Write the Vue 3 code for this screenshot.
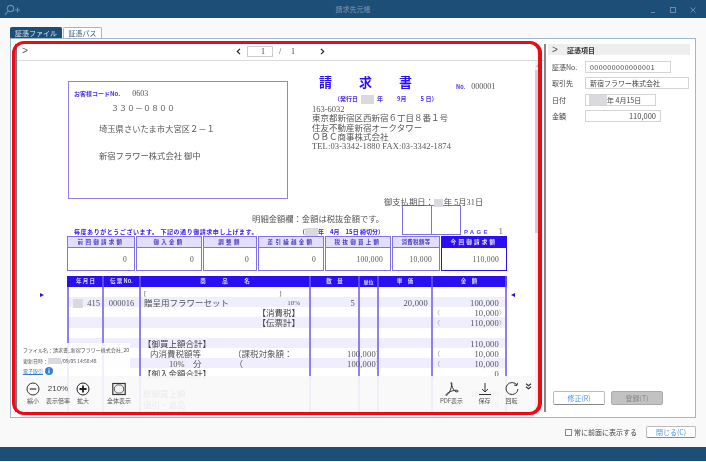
<template>
  <div class="window">
    <header class="titlebar">
      <svg class="zoom-icon" width="17" height="12" viewBox="0 0 17 12" fill="none" stroke="#6f8ba6" stroke-width="1.2">
        <circle cx="6.5" cy="4.5" r="3.2" />
        <path d="M4 7 1 11M11 6h5M13.500 3.500v5" />
      </svg>
      <span class="title">請求先元帳</span>
      <div class="controls">
        <svg width="8" height="8" viewBox="0 0 8 8" stroke="#6f8ba6" fill="none"><path d="M2 6.500h4" /></svg>
        <svg width="8" height="8" viewBox="0 0 8 8" stroke="#6f8ba6" fill="none"><rect x="1.500" y="1.500" width="5" height="5" /></svg>
        <svg width="8" height="8" viewBox="0 0 8 8" stroke="#6f8ba6" fill="none"><path d="m1.500 1.500 5 5M6.500 1.500l-5 5" /></svg>
      </div>
    </header>

    <main class="content">
      <div class="tabs">
        <span class="tab active">証憑ファイル</span>
        <span class="tab">証憑パス</span>
      </div>

      <section class="panel">
        <div class="viewer">
          <div class="pager">
            <span class="expand">&gt;</span>
            <svg class="pg-prev" width="5" height="7" viewBox="0 0 5 7" fill="none" stroke="#222" stroke-width="1.200"><path d="M4 .8 1.300 3.500 4 6.200" /></svg>
            <span class="pg-input">1</span>
            <span class="pg-slash">/</span>
            <span class="pg-total">1</span>
            <svg class="pg-next" width="5" height="7" viewBox="0 0 5 7" fill="none" stroke="#222" stroke-width="1.200"><path d="M1 .8 3.700 3.500 1 6.200" /></svg>
          </div>

          <div class="doc-wrap">
            <div class="doc">
              <div class="doc-top">
                <div class="addr">
                  <div class="addr-code"><b>お客様コードNo.</b><span>0603</span></div>
                  <div class="addr-zip">３３０－０８００</div>
                  <div class="addr-line">埼玉県さいたま市大宮区２－１</div>
                  <div class="addr-name">新宿フラワー株式会社 御中</div>
                </div>
                <div class="issuer">
                  <div class="issuer-head">
                    <span class="big">請求書</span>
                    <span class="no"><b>No.</b>000001</span>
                  </div>
                  <div class="issued">（発行日<i class="redact r-issue"></i>年<em>9月</em><em>5 日）</em></div>
                  <div class="company">
                    <div>163-6032</div>
                    <div>東京都新宿区西新宿６丁目８番１号</div>
                    <div>住友不動産新宿オークタワー</div>
                    <div>ＯＢＣ商事株式会社</div>
                    <div class="tel">TEL:03-3342-1880 FAX:03-3342-1874</div>
                  </div>
                </div>
              </div>

              <div class="doc-mid">
                <div class="mid-left">
                  <div class="mid-note">明細金額欄：金額は税抜金額です。</div>
                  <div class="thanks">
                    <span>毎度ありがとうございます。 下記の通り御請求申し上げます。</span>
                    <span>（<i class="redact r-thanks"></i>年　4月　15日 締切分）</span>
                  </div>
                </div>
                <div class="mid-stamp">
                  <div class="due">御支払期日：<i class="redact r-due"></i>年 5月31日</div>
                  <div class="stamps"><span></span><span></span></div>
                </div>
                <div class="page-no"><b>PAGE</b>1</div>
              </div>

              <div class="summary">
                <div v-for="s in summary" :key="s.label" class="sum-cell" :class="{ last: s.last }">
                  <div class="sum-head" :class="{ tight: s.tight }">{{ s.label }}</div>
                  <div class="sum-val">{{ s.value }}</div>
                </div>
              </div>

              <div class="detail">
                <span class="marker left"></span>
                <span class="marker right"></span>
                <div class="d-row d-head">
                  <span>年 月 日</span><span>伝 票 No.</span><span class="wide">商　　　品　　　名</span>
                  <span>数　量</span><span class="small">単位</span><span>単　価</span><span>金　額</span>
                </div>
                <div v-for="(r, i) in rows" :key="i" class="d-row" :class="{ zebra: r.zebra }">
                  <span class="c-date"><i v-if="r.date" class="redact r-date"></i>{{ r.date }}</span>
                  <span class="c-slip">{{ r.slip }}</span>
                  <span class="c-name" :class="r.nameClass">
                    <span>{{ r.name }}</span><span v-if="r.note" class="note">{{ r.note }}</span>
                  </span>
                  <span class="c-num c-qty"><b :class="{ over: r.over }">{{ r.qty }}</b></span>
                  <span></span>
                  <span class="c-num">{{ r.price }}</span>
                  <span class="c-amt">
                    <span>{{ r.open }}</span><span>{{ r.amount }}</span><span class="close">{{ r.close }}</span>
                  </span>
                </div>
              </div>
            </div>

            <div class="file-info">
              <div>ファイル名：請求書_新宿フラワー株式会社_20</div>
              <div>更新日時：<i class="redact r-info"></i>/09/05 14:58:48</div>
              <div class="link-row">
                <a>電子取引</a>
                <svg width="8" height="8" viewBox="0 0 8 8"><circle cx="4" cy="4" r="4" fill="#2f80d8" /><path d="M4 3.300v3M4 1.500v1" stroke="#fff" stroke-width="1.100" /></svg>
              </div>
            </div>

            <div class="tools">
              <div class="tool">
                <svg width="14" height="14" viewBox="0 0 14 14" fill="none" stroke="#333"><circle cx="7" cy="7" r="6" /><path d="M3.800 7h6.400" stroke-width="1.200" /></svg>
                <span>縮小</span>
              </div>
              <div class="tool">
                <strong>210%</strong>
                <span>表示倍率</span>
              </div>
              <div class="tool">
                <svg width="14" height="14" viewBox="0 0 14 14" fill="none" stroke="#222"><circle cx="7" cy="7" r="6" /><path d="M3.500 7h7M7 3.500v7" stroke-width="1.800" /></svg>
                <span>拡大</span>
              </div>
              <div class="tool fit">
                <svg width="14" height="14" viewBox="0 0 14 14" fill="none" stroke="#333"><rect x=".8" y="1.500" width="12.400" height="11" stroke-width="1.200" /><path d="M2.500 5Q4 4.500 4.500 3h5q.5 1.500 2 2v4q-1.500.5-2 2h-5Q4 9.500 2.500 9Z" stroke-width=".7" fill="#f2f2f2" /></svg>
                <span>全体表示</span>
              </div>
              <div class="tool pdf">
                <svg width="14" height="14" viewBox="0 0 14 14" fill="none" stroke="#333" stroke-width="1"><path d="M6 .8c.6 3 2 6.500 3.800 8.300 1.200 1.100 3.400 1 3.400 0 0-1-2.300-1.200-5.700-.3-3 .8-6 2.600-6.600 4.100-.3.800 1 .6 2-.6C5 10.600 7 4 6.800 1.200 6.700.4 6.100.4 6 .8Z" /></svg>
                <span>PDF表示</span>
              </div>
              <div class="tool save">
                <svg width="14" height="14" viewBox="0 0 14 14" fill="none" stroke="#333"><path d="M7 1v9M4 7l3 3 3-3M1 12.500h12" /></svg>
                <span>保存</span>
              </div>
              <div class="tool rotate">
                <svg width="14" height="14" viewBox="0 0 14 14" fill="none" stroke="#333"><path d="M12 3.200A6 6 0 1 0 13 7M12.500.8 12 3.500l-2.800-.4" /></svg>
                <span>回転</span>
              </div>
              <svg class="more" width="7" height="7" viewBox="0 0 7 7" fill="none" stroke="#333" stroke-width="1.100"><path d="m1 .8 2.500 2L6 .8M1 3.800l2.500 2 2.500-2" /></svg>
            </div>

            <div class="scrollbar"><span class="arrow"></span><span class="thumb"></span></div>
          </div>
        </div>

        <div class="splitter"></div>

        <aside class="side">
          <div class="side-head"><span class="expand">&gt;</span><b>証憑項目</b></div>
          <div class="fields">
            <div v-for="f in fields" :key="f.label" class="field">
              <label>{{ f.label }}</label>
              <div class="input" :class="f.cls"><i v-if="f.redact" class="redact r-field"></i>{{ f.value }}</div>
            </div>
          </div>
          <div class="side-actions">
            <button class="btn">修正(R)</button>
            <button class="btn off">登録(T)</button>
          </div>
        </aside>

        <div class="highlight"></div>
      </section>

      <footer class="foot">
        <span class="check"></span>
        <span class="check-label">常に前面に表示する</span>
        <button class="btn close">閉じる(C)</button>
      </footer>
    </main>

    <div class="statusbar"></div>
  </div>
</template>

<script setup>
const summary = [
  { label: '前回御請求額', value: '0' },
  { label: '御入金額', value: '0' },
  { label: '調整額', value: '0' },
  { label: '差引繰越金額', value: '0' },
  { label: '税抜御買上額', value: '100,000' },
  { label: '消費税額等', value: '10,000', tight: true },
  { label: '今回御請求額', value: '110,000', last: true },
]

const rows = [
  { name: '[　　　　　　　　　　　　　　　　　　　]', nameClass: 'n-bracket' },
  { zebra: true, date: '415', slip: '000016', name: '贈呈用フラワーセット', note: '10%', nameClass: 'n-item', qty: '5', price: '20,000', amount: '100,000' },
  { name: '【消費税】', nameClass: 'n-right', open: '〈', amount: '10,000', close: '〉' },
  { zebra: true, name: '【伝票計】', nameClass: 'n-right', open: '〈', amount: '110,000', close: '〉' },
  {},
  { zebra: true, name: '【御買上額合計】', nameClass: 'n-total', amount: '110,000' },
  { name: '内消費税額等', note: '（課税対象額：', nameClass: 'n-tax', qty: '100,000)', over: true, open: '（', amount: '10,000' },
  { zebra: true, name: '10%　分', note: '（', nameClass: 'n-tax2', qty: '100,000)', over: true, open: '（', amount: '10,000' },
  { name: '【御入金額合計】', nameClass: 'n-total', amount: '0' },
  {},
  { name: '総御買上額', nameClass: 'n-total', amount: '100,000' },
  { name: '値引・返品', nameClass: 'n-total', amount: '0' },
  { name: '純御買上額', nameClass: 'n-total', amount: '100,000' },
]

const fields = [
  { label: '証憑No.', value: '000000000000001', cls: 'w-no' },
  { label: '取引先', value: '新宿フラワー株式会社', cls: 'w-client' },
  { label: '日付', value: '年 4月15日', cls: 'w-date', redact: true },
  { label: '金額', value: '110,000', cls: 'w-amount' },
]
</script>

<style>
html, body { margin: 0; background: #fff; }
</style>

<style scoped>
.window {
  width: 706px; height: 462px; box-sizing: border-box; overflow: hidden;
  display: flex; flex-direction: column; background: #f9f9f9;
  font-family: "Noto Sans CJK JP", "Noto Sans", sans-serif; color: #444;
}
.titlebar {
  height: 18px; flex: none; background: #1c4e78; display: flex; align-items: center;
  justify-content: center; position: relative;
}
.zoom-icon { position: absolute; left: 4px; top: 4px; }
.title { font-size: 7px; color: #7f98b0; }
.controls { position: absolute; right: 9px; top: 6px; display: flex; gap: 12px; }

.content { flex: 1; min-height: 0; padding: 9px 10px 0; display: flex; flex-direction: column; }
.tabs { display: flex; height: 11px; gap: 1px; filter: blur(.3px); }
.tab {
  box-sizing: border-box; width: 39px; font-size: 7px; line-height: 10px; text-align: center;
  background: #fff; border: 1px solid #9fb8cf; border-bottom: 0; border-radius: 2px 2px 0 0; color: #3d5f7e;
}
.tab.active { width: 52px; background: #1c4e78; border-color: #1c4e78; color: #dbe6f0; }

.panel {
  position: relative; height: 380px; box-sizing: border-box; background: #fff;
  border: 1px solid #9fb8cf; padding: 5px 0 5px 4px; display: flex;
}
.highlight {
  position: absolute; left: 1px; top: 2px; width: 530px; height: 374px; box-sizing: border-box;
  border: 3px solid #ee0a14; border-right-width: 4px; border-radius: 12px; pointer-events: none;
}

.viewer { width: 529px; flex: none; box-sizing: border-box; border-left: 2px solid #777; display: flex; flex-direction: column; filter: blur(.3px); }
.pager {
  height: 17px; flex: none; box-sizing: border-box; border-bottom: 1px solid #ddd; display: flex; align-items: center;
  font-family: "Liberation Serif", serif; font-size: 8px; color: #444; padding-bottom: 2px;
}
.expand { font-family: "Liberation Sans", sans-serif; font-size: 10px; line-height: 10px; color: #555; }
.pager .expand { margin-left: 5px; width: 214px; }
.pg-prev { margin-right: 6px; }
.pg-input {
  box-sizing: border-box; width: 26px; height: 11px; border: 1px solid #ccc; text-align: right; padding-right: 7px; line-height: 9px;
}
.pg-slash { margin-left: 6px; width: 12px; }
.pg-total { width: 29px; }

.doc-wrap { position: relative; flex: 1; min-height: 0; overflow: hidden; }
.doc {
  height: 100%; box-sizing: border-box; padding-left: 50px; overflow: hidden; background: #fff;
  font-family: "Liberation Serif", "Noto Sans CJK JP", serif; color: #555;
}
.redact { display: inline-block; background: #d9d9de; vertical-align: middle; }

.doc-top { height: 124px; padding-top: 14px; display: flex; }
.addr {
  box-sizing: border-box; width: 220px; height: 118px; margin: 6px 0 0 1px; border: 1.500px solid #8f80ea;
  position: relative; padding: 5px 5px; font-size: 8.300px;
}
.addr-code { display: flex; gap: 12px; align-items: center; height: 12px; }
.addr-code b { font-size: 6px; color: #4a30e8; font-family: "Noto Sans CJK JP", sans-serif; }
.addr-code span { font-size: 8px; }
.addr-zip { margin: 5px 0 0 37px; font-size: 8px; line-height: 10px; }
.addr-line { margin: 11px 0 0 25px; line-height: 10px; }
.addr-name { margin: 17px 0 0 25px; line-height: 10px; }

.issuer { margin-left: 24px; width: 200px; flex: none; }
.issuer-head { display: flex; height: 17px; align-items: flex-end; margin-left: 7px; }
.big {
  font: 700 13px/16px "Noto Sans CJK JP", sans-serif; color: #2a10f0; letter-spacing: 27px; margin-bottom: 2px;
}
.no { margin-left: 17px; font-size: 8px; line-height: 10px; white-space: nowrap; }
.no b { font-size: 5.500px; color: #4a30e8; font-family: "Noto Sans CJK JP", sans-serif; margin-right: 6px; }
.issued {
  margin: 2px 0 0 22px; height: 9px; font: 700 6px/9px "Noto Sans CJK JP", sans-serif;
  color: #4a30e8; white-space: nowrap;
}
.issued em { font-style: normal; margin-left: 14px; }
.r-issue { width: 13px; height: 9px; margin: 0 3px; }
.company { margin-top: 2px; font-size: 8.500px; line-height: 9.300px; white-space: nowrap; }
.tel { letter-spacing: .12px; }

.doc-mid { height: 37px; display: flex; }
.mid-left { width: 317px; flex: none; display: flex; flex-direction: column; justify-content: flex-end; }
.mid-note { text-align: right; font-size: 8.300px; line-height: 10px; padding-bottom: 2px; }
.thanks {
  display: flex; justify-content: space-between; padding-left: 7px; height: 9px; white-space: nowrap;
  font: 700 6px/9px "Noto Sans CJK JP", sans-serif; color: #3d20ec;
}
.thanks span:first-child { letter-spacing: .55px; }
.r-thanks { width: 13px; height: 8px; }
.mid-stamp { width: 80px; flex: none; }
.due { height: 6px; line-height: 6px; font-size: 8.300px; white-space: nowrap; }
.r-due { width: 9px; height: 8px; margin-right: 1px; }
.stamps { margin-left: 18px; display: flex; width: 59px; height: 30px; box-sizing: border-box; border: 1.500px solid #7f6fe8; }
.stamps span { flex: 1; }
.stamps span + span { border-left: 1.500px solid #7f6fe8; }
.page-no { align-self: flex-end; height: 9px; line-height: 9px; font-size: 8px; white-space: nowrap; }
.page-no b { font: 700 6px/9px "Liberation Sans", sans-serif; color: #5a44ea; letter-spacing: 2.300px; margin-right: 9px; }

.summary { width: 440px; display: grid; grid-template-columns: 68px 66px 54px 66px 66px 48px 66px; gap: 1px; }
.sum-cell { height: 35px; box-sizing: border-box; border: 1.500px solid #8373ea; display: flex; flex-direction: column; }
.sum-head {
  height: 10px; flex: none; background: #e2defb; border-bottom: 1px solid #8373ea; text-align: center;
  font: 700 5.500px/10px "Noto Sans CJK JP", sans-serif; letter-spacing: 2.300px; color: #4a3bc0; white-space: nowrap;
}
.sum-head.tight { letter-spacing: .3px; }
.sum-val { flex: 1; text-align: right; padding-right: 7px; font-size: 7.500px; line-height: 24px; letter-spacing: .3px; }
.sum-cell.last { border-color: #2a10f0; }
.last .sum-head { background: #2a10f0; color: #e6e3fb; border-color: #2a10f0; }

.detail { position: relative; width: 440px; margin-top: 5px; }
.marker { position: absolute; top: 17px; width: 0; height: 0; border: 2.500px solid transparent; }
.marker.left { left: -27px; border-left: 4px solid #2a10f0; border-right: 0; }
.marker.right { right: -8px; border-right: 4px solid #2a10f0; border-left: 0; }
.d-row {
  display: grid; grid-template-columns: 37px 37px 170px 49px 19px 54px 74px; height: 10.150px;
  font-size: 8.500px; line-height: 10px; white-space: nowrap;
}
.d-row > span { border-right: 2px solid #8f80ea; box-sizing: border-box; overflow: hidden; padding-top: 1px; }
.d-row > span:first-child { border-left: 2px solid #8f80ea; }
.d-row.zebra { background: #f0eefc; }
.d-head {
  height: 11px; background: #2a10f0; color: #dcd8ff; text-align: center;
  font: 700 5.500px/11px "Noto Sans CJK JP", sans-serif;
}
.d-head > span { border-color: #5a48f0; padding-top: 0; }
.d-head > span:first-child { border-left-color: #2a10f0; }
.d-head .small { font-size: 5px; }
.c-date { padding-right: 2px; display: flex; justify-content: flex-end; align-items: center; gap: 4px; }
.r-date { width: 10px; height: 9px; }
.c-slip { text-align: center; }
.d-row > .c-num { text-align: right; padding-right: 3px; letter-spacing: .2px; overflow: visible; }
.c-qty b { font-weight: 400; display: block; }
.c-qty b.over { margin-right: -24px; }
.c-name { display: flex; justify-content: space-between; padding: 0 9px 0 3px; }
.note { font-size: 7px; }
.n-bracket { font-size: 7px; }
.n-right { justify-content: flex-end; color: #444; }
.n-total { padding-left: 2px; color: #444; }
.n-tax { padding-left: 9px; justify-content: flex-start; gap: 32px; }
.n-tax2 { padding-left: 28px; justify-content: flex-start; gap: 33px; }
.n-tax .note, .n-tax2 .note { font-size: 8.500px; }
.c-amt { display: flex; padding-left: 1px; }
.c-amt span:first-child { width: 6px; flex: none; font-size: 6px; color: #888; }
.c-amt span:nth-child(2) { flex: 1; text-align: right; letter-spacing: .2px; }
.c-amt .close { width: 6px; flex: none; font-size: 6px; color: #888; }

.file-info {
  position: absolute; left: 0; bottom: 36px; width: 113px; height: 33px; box-sizing: border-box; padding: 2px 0 0 6px;
  background: rgba(255, 255, 255, .88); font-size: 5px; line-height: 10.500px; color: #555; white-space: nowrap;
}
.file-info a { color: #3a78c8; text-decoration: underline; margin-right: 2px; }
.link-row { display: flex; align-items: center; }
.r-info { width: 13px; height: 6px; }
.tools {
  position: absolute; left: 0; right: 9px; bottom: 0; height: 36px; background: rgba(248, 248, 248, .92);
  display: flex; padding: 6px 0 0 3.500px; box-sizing: border-box;
}
.tool { width: 25px; display: flex; flex-direction: column; align-items: center; font-size: 6px; color: #555; line-height: 9px; white-space: nowrap; }
.tool svg { height: 14px; }
.tool strong { font: 400 8px/14px "Liberation Sans", sans-serif; color: #444; }
.tool.fit { margin-left: 11px; }
.tool.pdf { margin-left: auto; }
.tool.save { margin-left: 8px; }
.tool.rotate { margin-left: 2px; }
.more { margin: 1px 3px 0 1px; }

.scrollbar { position: absolute; top: 0; bottom: 0; right: 3px; width: 6px; background: #f0f0f0; display: flex; flex-direction: column; align-items: center; }
.arrow { margin-top: 3px; border: 2px solid transparent; border-bottom: 3px solid #bbb; border-top: 0; }
.thumb { margin-top: 3px; width: 100%; height: 163px; background: #cfcfcf; }

.splitter { width: 2px; flex: none; background: #888; }

.side { flex: 1; min-width: 0; padding-left: 2px; display: flex; flex-direction: column; filter: blur(.3px); }
.side-head {
  width: 142px; height: 11px; background: #eee; display: flex; align-items: center; font-size: 7px; color: #333;
}
.side-head .expand { margin-left: 4px; width: 15px; }
.fields { margin-top: 5.500px; padding-left: 4px; display: flex; flex-direction: column; gap: 4.500px; }
.field { display: flex; height: 12px; align-items: center; }
.field label { width: 33px; font-size: 7px; color: #444; }
.input {
  box-sizing: border-box; height: 12px; border: 1px solid #d4d4d4; background: #fff; padding: 0 4px; font-size: 7px; line-height: 10px;
  display: flex; align-items: center; color: #444;
}
.w-no { width: 86px; letter-spacing: .45px; }
.w-client { width: 104px; }
.w-date { width: 71px; padding-left: 3px; }
.r-field { width: 18px; height: 10px; }
.w-amount { width: 76px; justify-content: flex-end; font-size: 7.500px; }
.side-actions { margin-top: auto; padding: 0 0 7px 5px; display: flex; gap: 6px; }
.btn {
  box-sizing: border-box; width: 52px; height: 14px; padding: 0; background: #fff; border: 1px solid #bbb; border-bottom-color: #888; border-radius: 2px;
  font: 7px/12px "Noto Sans CJK JP", sans-serif; color: #4f93e8;
}
.btn.off { background: #c2c2c2; color: #888; border-color: #aaa; }

.foot { flex: 1; display: flex; align-items: flex-start; padding: 8px 0 0 555px; filter: blur(.3px); }
.check { width: 7px; height: 7px; box-sizing: border-box; border: 1px solid #888; background: #fff; margin-top: 3px; }
.check-label { margin-left: 2px; font-size: 7px; line-height: 12px; color: #444; width: 72px; white-space: nowrap; }
.btn.close { width: 50px; height: 12px; line-height: 10px; }

.statusbar { height: 14px; flex: none; margin-bottom: 1px; background: #1c4e78; }
</style>
